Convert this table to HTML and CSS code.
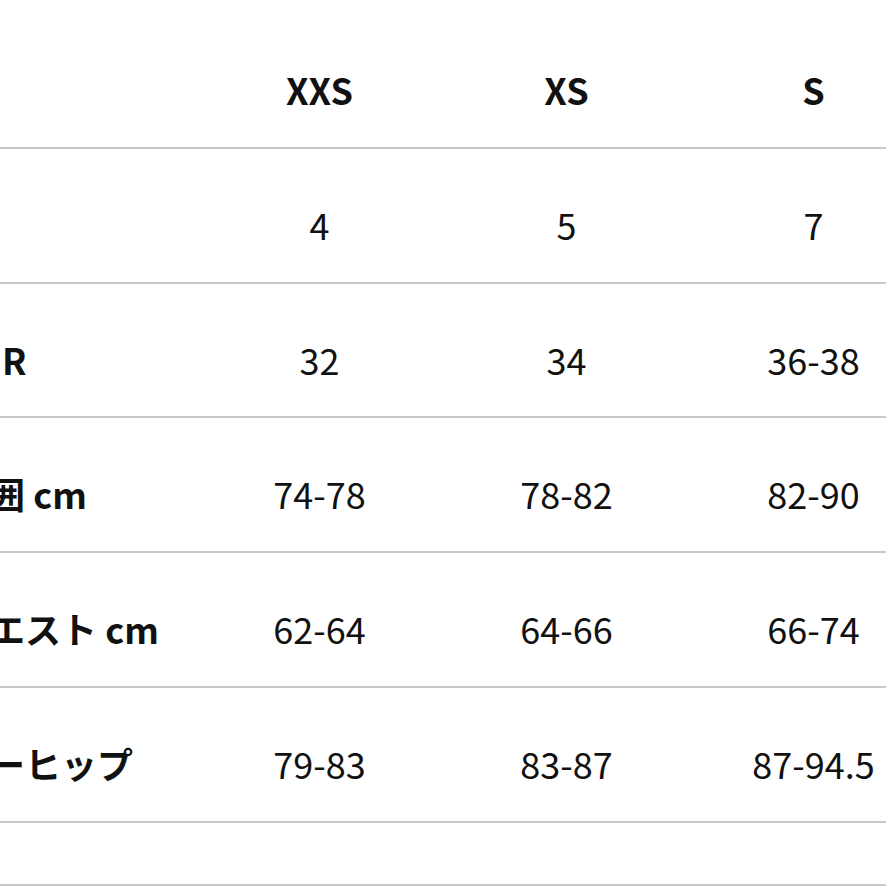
FILE: index.html
```html
<!DOCTYPE html>
<html lang="ja">
<head>
<meta charset="utf-8">
<link rel="stylesheet" href="styles.css">
</head>
<body>
<div class="chart">
  <div class="row head">
    <div class="cell label"></div>
    <div class="cell">XXS</div>
    <div class="cell">XS</div>
    <div class="cell">S</div>
  </div>
  <div class="row">
    <div class="cell label"></div>
    <div class="cell">4</div>
    <div class="cell">5</div>
    <div class="cell">7</div>
  </div>
  <div class="row">
    <div class="cell label">EUR</div>
    <div class="cell">32</div>
    <div class="cell">34</div>
    <div class="cell">36-38</div>
  </div>
  <div class="row">
    <div class="cell label">胸囲 cm</div>
    <div class="cell">74-78</div>
    <div class="cell">78-82</div>
    <div class="cell">82-90</div>
  </div>
  <div class="row">
    <div class="cell label">ウエスト cm</div>
    <div class="cell">62-64</div>
    <div class="cell">64-66</div>
    <div class="cell">66-74</div>
  </div>
  <div class="row">
    <div class="cell label">ローヒップ</div>
    <div class="cell">79-83</div>
    <div class="cell">83-87</div>
    <div class="cell">87-94.5</div>
  </div>
  <div class="row tail"></div>
</div>
</body>
</html>
```
FILE: styles.css
```css
html, body {
  margin: 0;
  padding: 0;
  background: #ffffff;
  overflow: hidden;
}
body {
  width: 886px;
  height: 886px;
  font-family: "Noto Sans CJK JP", "Noto Sans", sans-serif;
  color: #111111;
}
.chart {
  margin-left: -47px;
  padding-top: 14px;
  width: 984px;
}
.row {
  display: grid;
  grid-template-columns: 243px 247px 247px 247px;
  height: 132.8px;
  border-bottom: 2px solid #c8c8c8;
}
.row.tail {
  height: 61px;
}
.cell {
  padding-top: 57px;
  font-size: 36px;
  line-height: 36px;
  font-weight: 400;
  text-align: center;
  white-space: nowrap;
}
.cell.label {
  text-align: left;
  font-weight: 700;
}
.head .cell {
  font-weight: 700;
}
```
